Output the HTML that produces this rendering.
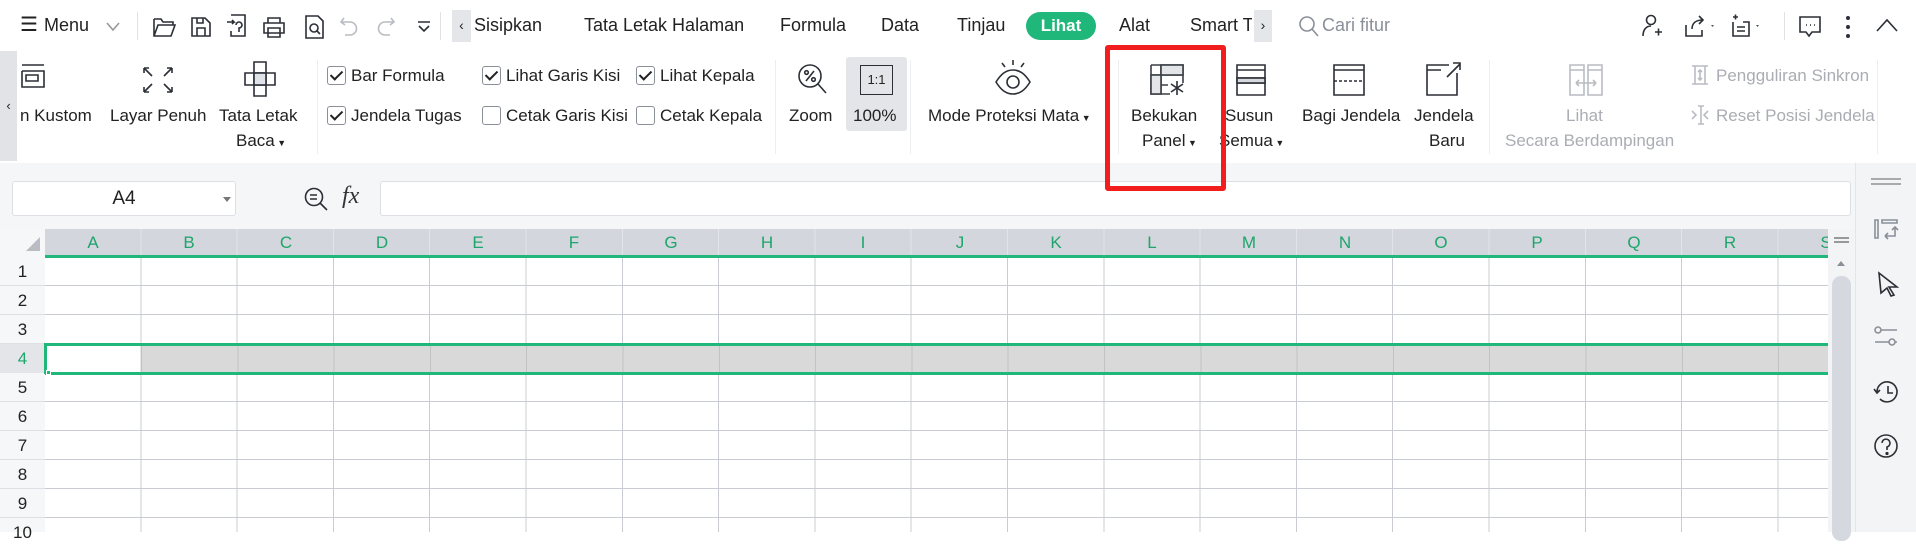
<!DOCTYPE html>
<html><head><meta charset="utf-8">
<style>
*{box-sizing:border-box;margin:0;padding:0}
body{width:1916px;height:532px;overflow:hidden;background:#fff;font-family:"Liberation Sans",sans-serif;color:#222;position:relative}
.a{position:absolute;white-space:nowrap}
.t{font-size:18px;top:15px}
.lbl{font-size:17px;text-align:center}
svg{position:absolute;fill:none;stroke:#2b2f36;stroke-width:1.6}
.cb{position:absolute;width:19px;height:19px;border:1.3px solid #8a8f98;border-radius:3px;background:#fff}
.cb.on::after{content:"";position:absolute;left:5px;top:1px;width:5px;height:10px;border:solid #222;border-width:0 2.4px 2.4px 0;transform:rotate(45deg)}
.col{position:absolute;top:229px;height:28px;font-size:17px;color:#1ea56b;text-align:center;line-height:28px}
.rn{position:absolute;left:0;width:45px;text-align:center;font-size:17px;line-height:29px;height:29px}
</style></head><body>
<!-- top bar -->
<div class="a" style="left:0;top:0;width:1916px;height:51px;background:#fff"></div>
<div class="a t" style="left:20px;font-size:20px;top:12px">☰</div>
<div class="a t" style="left:44px">Menu</div>
<svg style="left:106px;top:22px" width="14" height="10"><path d="M1 1l6 7 6-7" stroke="#999"/></svg>
<div class="a" style="left:137px;top:12px;width:1px;height:28px;background:#e0e2e6"></div>
<svg style="left:152px;top:15px" width="26" height="24"><path d="M2 4h7l2 3h10v3M2 4v17h17l4-11H6L2 21"/></svg>
<svg style="left:189px;top:15px" width="24" height="24"><path d="M3 3h13l5 5v13H3zM8 3v5h6V3M8 21v-8h8v8"/></svg>
<svg style="left:225px;top:13px" width="24" height="26"><path d="M6 2h14v21H6v-5M2 9h7l-2-2M9 9l-2 2M11 12a3 3 0 1 1 3 3v4"/></svg>
<svg style="left:261px;top:15px" width="26" height="24"><path d="M7 8V3h12v5M3 8h20v10H3zM7 13h12v9H7z"/></svg>
<svg style="left:303px;top:14px" width="24" height="26"><path d="M3 2h12l5 5v17H3zM17 20l-3-3"/><circle cx="11" cy="14" r="4"/></svg>
<svg style="left:339px;top:16px" width="20" height="22"><path d="M5 2L2 6l4 3M2 6h9a6 6 0 0 1 0 13H6" stroke="#b9bcc2"/></svg>
<svg style="left:376px;top:16px" width="20" height="22"><path d="M15 2l3 4-4 3M18 6H9a6 6 0 0 0 0 13h5" stroke="#b9bcc2"/></svg>
<svg style="left:417px;top:21px" width="14" height="12"><path d="M1 1h12M2 5l5 5 5-5"/></svg>
<div class="a" style="left:440px;top:12px;width:1px;height:28px;background:#e0e2e6"></div>
<div class="a" style="left:452px;top:10px;width:19px;height:32px;background:#e4e6ea;font-size:14px;text-align:center;line-height:30px">‹</div>
<div class="a t" style="left:474px">Sisipkan</div>
<div class="a t" style="left:584px">Tata Letak Halaman</div>
<div class="a t" style="left:780px">Formula</div>
<div class="a t" style="left:881px">Data</div>
<div class="a t" style="left:957px">Tinjau</div>
<div class="a" style="left:1026px;top:12px;width:70px;height:28px;border-radius:14px;background:#1fb87a;color:#fff;font-weight:bold;font-size:17px;text-align:center;line-height:28px">Lihat</div>
<div class="a t" style="left:1119px">Alat</div>
<div class="a t" style="left:1190px;width:62px;overflow:hidden">Smart Tool</div>
<div class="a" style="left:1254px;top:10px;width:18px;height:32px;background:#e4e6ea;font-size:14px;text-align:center;line-height:30px">›</div>
<svg style="left:1298px;top:14px" width="22" height="24"><circle cx="9" cy="10" r="7" stroke="#8a8f98"/><path d="M14 15l6 7" stroke="#8a8f98"/></svg>
<div class="a t" style="left:1322px;color:#8a8f98">Cari fitur</div>
<svg style="left:1640px;top:13px" width="24" height="26"><circle cx="11" cy="7" r="4.5"/><path d="M3 23c0-6 3-10 8-10M15 19h7M18.5 15.5v7"/></svg>
<svg style="left:1682px;top:13px" width="36" height="26"><path d="M4 12v11h16v-6M10 16c0-6 4-9 11-9M17 3l4 4-4 4"/><path d="M29 12l3 0-1.5 2z" fill="#555" stroke="none"/></svg>
<svg style="left:1730px;top:13px" width="40" height="26"><path d="M3 4h5M5.5 1.5v5M3 9v14h16V9h-6M7 14h8M7 18h8"/><path d="M26 12l3 0-1.5 2z" fill="#555" stroke="none"/></svg>
<div class="a" style="left:1784px;top:12px;width:1px;height:28px;background:#e0e2e6"></div>
<svg style="left:1798px;top:15px" width="24" height="24"><path d="M2 2h20v15h-8l-3 4-3-4H2z"/><path d="M8 10h1M12 10h1M16 10h1"/></svg>
<svg style="left:1843px;top:14px" width="10" height="26"><circle cx="5" cy="4" r="1.2" fill="#555"/><circle cx="5" cy="13" r="1.2" fill="#555"/><circle cx="5" cy="22" r="1.2" fill="#555"/></svg>
<svg style="left:1876px;top:18px" width="22" height="14"><path d="M1 13L11 2l10 11"/></svg>

<!-- ribbon -->
<div class="a" style="left:0;top:51px;width:1916px;height:112px;background:#fff;box-shadow:0 2px 3px rgba(0,0,0,.08)"></div>
<div class="a" style="left:0;top:51px;width:17px;height:110px;background:#e1e3e7;font-size:13px;line-height:110px;text-align:center">‹</div>
<svg style="left:18px;top:63px" width="30" height="32"><path d="M4 2h22M4 8h22v16H4V8M8 12h12v6H8z"/></svg>
<div class="a lbl" style="left:20px;top:106px">n Kustom</div>
<svg style="left:141px;top:65px" width="34" height="30"><path d="M3 3l8 8M3 3v5M3 3h5M31 3l-8 8M31 3v5M31 3h-5M3 27l8-8M3 27v-5M3 27h5M31 27l-8-8M31 27v-5M31 27h-5"/></svg>
<div class="a lbl" style="left:110px;top:106px">Layar Penuh</div>
<svg style="left:243px;top:60px" width="34" height="38"><path d="M11 2h12v34H11zM2 13h30v12H2z"/><rect x="11" y="13" width="12" height="12" fill="#dfe2e6"/></svg>
<div class="a lbl" style="left:219px;top:106px">Tata Letak</div>
<div class="a lbl" style="left:236px;top:131px">Baca<span style="font-size:9px"> ▼</span></div>
<div class="a" style="left:317px;top:60px;width:1px;height:94px;background:#eceef1"></div>
<div class="cb on" style="left:327px;top:66px"></div><div class="a lbl" style="left:351px;top:66px">Bar Formula</div>
<div class="cb on" style="left:327px;top:106px"></div><div class="a lbl" style="left:351px;top:106px">Jendela Tugas</div>
<div class="cb on" style="left:482px;top:66px"></div><div class="a lbl" style="left:506px;top:66px">Lihat Garis Kisi</div>
<div class="cb" style="left:482px;top:106px"></div><div class="a lbl" style="left:506px;top:106px">Cetak Garis Kisi</div>
<div class="cb on" style="left:636px;top:66px"></div><div class="a lbl" style="left:660px;top:66px">Lihat Kepala</div>
<div class="cb" style="left:636px;top:106px"></div><div class="a lbl" style="left:660px;top:106px">Cetak Kepala</div>
<div class="a" style="left:775px;top:60px;width:1px;height:94px;background:#eceef1"></div>
<svg style="left:797px;top:63px" width="32" height="34"><circle cx="13" cy="13" r="11"/><path d="M21 21l8 9M9 18l8-10"/><circle cx="9.5" cy="9.5" r="1.8"/><circle cx="16.5" cy="16.5" r="1.8"/></svg>
<div class="a lbl" style="left:789px;top:106px">Zoom</div>
<div class="a" style="left:846px;top:57px;width:61px;height:74px;background:#e3e5e9;border-radius:3px"></div>
<div class="a" style="left:860px;top:65px;width:33px;height:30px;border:1.6px solid #2b2f36;font-size:13px;text-align:center;line-height:27px">1:1</div>
<div class="a lbl" style="left:853px;top:106px">100%</div>
<div class="a" style="left:910px;top:60px;width:1px;height:94px;background:#eceef1"></div>
<svg style="left:994px;top:58px" width="38" height="38"><path d="M2 24c5-8 10-12 17-12s12 4 17 12c-5 8-10 12-17 12S7 32 2 24z"/><circle cx="19" cy="24" r="6"/><path d="M19 2v5M8 5l3 4M30 5l-3 4"/></svg>
<div class="a lbl" style="left:928px;top:106px">Mode Proteksi Mata<span style="font-size:9px"> ▼</span></div>
<div class="a" style="left:1118px;top:60px;width:1px;height:94px;background:#eceef1"></div>
<svg style="left:1149px;top:63px" width="38" height="34"><path d="M2 2h32v18M2 2v29h19M2 12h32M2 22h17M12 2v29M23 2v10" stroke="#3a3f47"/><rect x="12" y="2" width="22" height="10" fill="#e3e5e9" stroke="#3a3f47"/><rect x="2" y="12" width="10" height="19" fill="#e3e5e9" stroke="#3a3f47"/><path d="M28 18v14M22 21l12 8M22 29l12-8"/></svg>
<div class="a lbl" style="left:1131px;top:106px">Bekukan</div>
<div class="a lbl" style="left:1142px;top:131px">Panel<span style="font-size:9px"> ▼</span></div>
<svg style="left:1235px;top:63px" width="32" height="34"><path d="M2 2h28v30H2zM2 7h28M2 15h28M2 20h28"/><rect x="2" y="15" width="28" height="5" fill="#d5d8dd"/></svg>
<div class="a lbl" style="left:1225px;top:106px">Susun</div>
<div class="a lbl" style="left:1219px;top:131px">Semua<span style="font-size:9px"> ▼</span></div>
<svg style="left:1332px;top:63px" width="34" height="34"><path d="M2 2h30v30H2zM2 7h30"/><path d="M2 18h30" stroke-dasharray="3 2"/></svg>
<div class="a lbl" style="left:1302px;top:106px">Bagi Jendela</div>
<svg style="left:1425px;top:61px" width="38" height="36"><path d="M24 4H2v30h30V12M2 9h14M22 16L35 3M28 2h7v7"/></svg>
<div class="a lbl" style="left:1414px;top:106px">Jendela</div>
<div class="a lbl" style="left:1429px;top:131px">Baru</div>
<div class="a" style="left:1489px;top:60px;width:1px;height:94px;background:#eceef1"></div>
<svg style="left:1568px;top:63px" width="36" height="34"><path d="M2 2h14v30H2zM20 2h14v30H20zM2 7h14M20 7h14M8 20h20M8 20l3-3M8 20l3 3M28 20l-3-3M28 20l-3 3" stroke="#b9bcc2"/></svg>
<div class="a lbl" style="left:1566px;top:106px;color:#aaadb3">Lihat</div>
<div class="a lbl" style="left:1505px;top:131px;color:#aaadb3">Secara Berdampingan</div>
<svg style="left:1690px;top:64px" width="20" height="22"><path d="M2 2h16M2 20h16M5 2v18M15 2v18M10 6v10M8 8l2-2 2 2M8 14l2 2 2-2" stroke="#b9bcc2"/></svg>
<div class="a lbl" style="left:1716px;top:66px;color:#aaadb3">Pengguliran Sinkron</div>
<svg style="left:1690px;top:104px" width="20" height="22"><path d="M8 2h6M8 20h6M11 2v18M2 7l4 4-4 4M18 7l-4 4 4 4" stroke="#b9bcc2"/></svg>
<div class="a lbl" style="left:1716px;top:106px;color:#aaadb3">Reset Posisi Jendela</div>
<div class="a" style="left:1877px;top:60px;width:1px;height:94px;background:#eceef1"></div>

<!-- formula area -->
<div class="a" style="left:0;top:163px;width:1855px;height:66px;background:#f5f6f8"></div>
<div class="a" style="left:12px;top:181px;width:224px;height:35px;background:#fff;border:1px solid #dcdfe4;border-radius:3px;font-size:19px;text-align:center;line-height:33px">A4</div>
<div class="a" style="left:223px;top:197px;width:0;height:0;border:4px solid transparent;border-top:5px solid #777"></div>
<svg style="left:303px;top:186px" width="26" height="26"><circle cx="11" cy="11" r="8.5"/><path d="M17 17l7 7M7 9h7M7 13h7"/></svg>
<div class="a" style="left:342px;top:183px;font-size:24px;font-style:italic;font-family:'Liberation Serif',serif;color:#333">fx</div>
<div class="a" style="left:380px;top:181px;width:1471px;height:35px;background:#fff;border:1px solid #dcdfe4;border-radius:3px"></div>

<!-- grid -->
<div class="a" style="left:0;top:229px;width:1855px;height:303px;background:#fff"></div>
<div class="a" style="left:0;top:229px;width:45px;height:303px;background:#f6f7f9"></div>
<div class="a" style="left:26px;top:237px;width:0;height:0;border-left:14px solid transparent;border-bottom:14px solid #b9bcc2"></div>
<div class="a" style="left:45px;top:229px;width:1783px;height:28px;background:#d3d6dc;background-image:repeating-linear-gradient(90deg,transparent 0 95.3px,#e2e4e8 95.3px 96.3px)"></div>
<div class="a" style="left:45px;top:257px;width:1783px;height:275px;background-image:repeating-linear-gradient(90deg,transparent 0 95.3px,#c9ccd3 95.3px 96.3px),repeating-linear-gradient(180deg,transparent 0 28px,#c9ccd3 28px 29px)"></div>
<div class="a" style="left:0;top:257px;width:45px;height:275px;background-image:repeating-linear-gradient(180deg,transparent 0 28px,#dcdfe4 28px 29px)"></div>
<div class="a" style="left:0;top:344px;width:45px;height:29px;background:#e3e5e9"></div>
<div class="a" style="left:141px;top:345px;width:1687px;height:28px;background:#d9d9d9;background-image:repeating-linear-gradient(90deg,#c0c2c6 0 1px,transparent 1px 96.3px)"></div>
<div class="a" style="left:45px;top:255px;width:1783px;height:2.5px;background:#1fb87a"></div>
<div class="a" style="left:45px;top:343px;width:1783px;height:2.5px;background:#1fb87a"></div>
<div class="a" style="left:45px;top:372px;width:1783px;height:2.5px;background:#1fb87a"></div>
<div class="a" style="left:44px;top:343px;width:2.5px;height:31px;background:#1fb87a"></div>
<div class="a" style="left:46px;top:370px;width:5px;height:5px;background:#1fb87a;border:1px solid #fff"></div>
<div class="col" style="left:45px;width:96px">A</div><div class="col" style="left:141px;width:96px">B</div><div class="col" style="left:238px;width:96px">C</div><div class="col" style="left:334px;width:96px">D</div><div class="col" style="left:430px;width:96px">E</div><div class="col" style="left:526px;width:96px">F</div><div class="col" style="left:623px;width:96px">G</div><div class="col" style="left:719px;width:96px">H</div><div class="col" style="left:815px;width:96px">I</div><div class="col" style="left:912px;width:96px">J</div><div class="col" style="left:1008px;width:96px">K</div><div class="col" style="left:1104px;width:96px">L</div><div class="col" style="left:1201px;width:96px">M</div><div class="col" style="left:1297px;width:96px">N</div><div class="col" style="left:1393px;width:96px">O</div><div class="col" style="left:1489px;width:96px">P</div><div class="col" style="left:1586px;width:96px">Q</div><div class="col" style="left:1682px;width:96px">R</div><div class="col" style="left:1778px;width:96px">S</div>
<div class="rn" style="top:257px">1</div><div class="rn" style="top:286px">2</div><div class="rn" style="top:315px">3</div><div class="rn" style="top:344px;color:#1ea56b">4</div><div class="rn" style="top:373px">5</div><div class="rn" style="top:402px">6</div><div class="rn" style="top:431px">7</div><div class="rn" style="top:460px">8</div><div class="rn" style="top:489px">9</div><div class="rn" style="top:518px">10</div>
<!-- scrollbar -->
<div class="a" style="left:1828px;top:229px;width:27px;height:303px;background:#f3f4f6"></div>
<div class="a" style="left:1834px;top:237px;width:15px;height:1.5px;background:#999"></div><div class="a" style="left:1834px;top:241px;width:15px;height:1.5px;background:#999"></div>
<div class="a" style="left:1837px;top:261px;width:0;height:0;border:4px solid transparent;border-bottom:5px solid #8a8f98;border-top:0"></div>
<div class="a" style="left:1832px;top:276px;width:19px;height:265px;background:#d5d8de;border-radius:9px"></div>
<!-- sidebar -->
<div class="a" style="left:1855px;top:163px;width:61px;height:369px;background:#f3f4f6;border-left:1px solid #e3e5e9"></div>
<div class="a" style="left:1871px;top:178px;width:30px;height:1.5px;background:#aaa"></div><div class="a" style="left:1871px;top:183px;width:30px;height:1.5px;background:#aaa"></div>
<svg style="left:1873px;top:218px" width="28" height="24"><path d="M2 2h3v18H2zM9 2h15v3H9zM12 18h10V9M19 12l3-3 3 3M12 18l3-3M12 18l3 3" stroke="#8a8f98"/></svg>
<svg style="left:1877px;top:271px" width="22" height="26"><path d="M2 2l18 14h-8l5 8-3 1-4-8-6 5z"/></svg>
<svg style="left:1873px;top:325px" width="26" height="22"><circle cx="5" cy="5" r="3" stroke="#8a8f98"/><path d="M8 5h16M2 17h14M22 17h2" stroke="#8a8f98"/><circle cx="19" cy="17" r="3" stroke="#8a8f98"/></svg>
<svg style="left:1873px;top:379px" width="28" height="26"><path d="M4 13a10 10 0 1 1 3 7M1 10l3 4 3-3M15 7v7h5"/></svg>
<svg style="left:1873px;top:433px" width="26" height="26"><circle cx="13" cy="13" r="11"/><path d="M9 10a4 4 0 1 1 5 4v3"/><circle cx="14" cy="20.5" r="0.8" fill="#2b2f36"/></svg>
<!-- red box on top -->
<div class="a" style="left:1105px;top:45px;width:121px;height:146px;border:5px solid #f21d1d;border-radius:3px"></div>
</body></html>
